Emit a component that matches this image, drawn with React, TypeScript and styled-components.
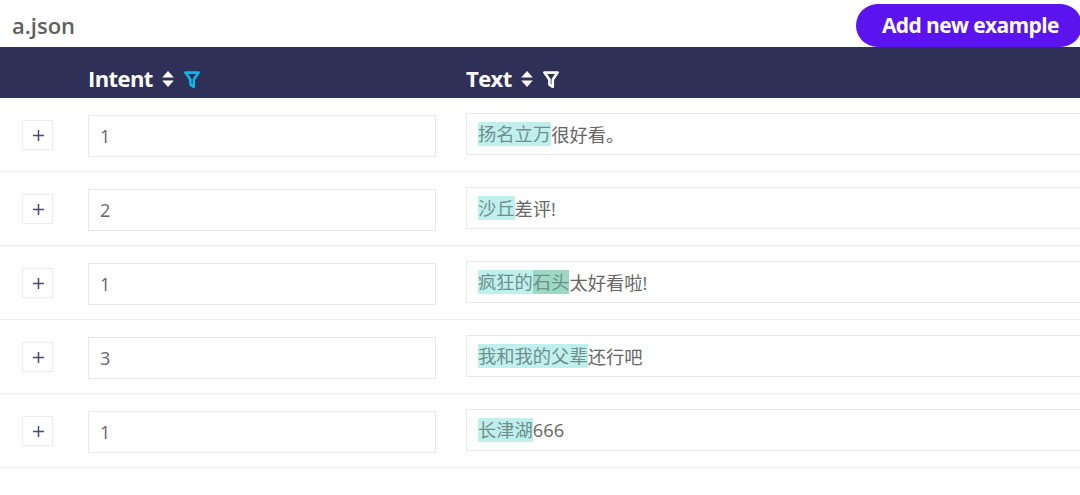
import { createGlobalStyle } from 'styled-components';
import styled from 'styled-components';

interface Mark {
  text: string;
  dark?: boolean;
}

interface Example {
  intent: string;
  marks: Mark[];
  rest: string;
}

const examples: Example[] = [
  { intent: '1', marks: [{ text: '扬名立万' }], rest: '很好看。' },
  { intent: '2', marks: [{ text: '沙丘' }], rest: '差评!' },
  { intent: '1', marks: [{ text: '疯狂的' }, { text: '石头', dark: true }], rest: '太好看啦!' },
  { intent: '3', marks: [{ text: '我和我的父辈' }], rest: '还行吧' },
  { intent: '1', marks: [{ text: '长津湖' }], rest: '666' },
];

const GlobalStyle = createGlobalStyle`
  html, body {
    margin: 0;
    padding: 0;
    background: #fff;
    overflow: hidden;
  }
  body {
    font-family: "Open Sans", "Noto Sans", "Noto Sans CJK SC", sans-serif;
  }
`;

const Page = styled.div`
  width: 1080px;
  height: 495px;
  overflow: hidden;
`;

const TopBar = styled.div`
  display: flex;
  justify-content: space-between;
  align-items: center;
  height: 47px;
  padding-left: 12px;
  box-sizing: border-box;
  width: 1082px;
`;

const FileName = styled.div`
  font-size: 22px;
  font-weight: 600;
  letter-spacing: 0;
  color: #5f5f5f;
  margin-top: 3px;
`;

const AddButton = styled.button`
  width: 226px;
  height: 43px;
  margin-top: 3px;
  border: none;
  border-radius: 22px;
  background: #5b14ee;
  color: #fff;
  font-family: inherit;
  font-size: 21px;
  font-weight: 700;
  letter-spacing: -0.62px;
  padding: 0 0 1px 3px;
  text-align: left;
  text-indent: 23px;
`;

const HeaderRow = styled.div`
  display: grid;
  grid-template-columns: 88px 378px 1fr;
  align-items: center;
  height: 51px;
  background: #2f3057;
  color: #fff;
`;

const HeaderCell = styled.div<{ $col: number }>`
  grid-column: ${(p) => p.$col};
  display: flex;
  align-items: center;
  font-size: 22px;
  font-weight: 700;
  letter-spacing: -0.6px;
  padding-top: 11px;
`;

const SortIcon = styled.svg`
  width: 12px;
  height: 18px;
  margin-left: 9px;
  margin-top: 1px;
`;

const FilterIcon = styled.svg`
  width: 16px;
  height: 18px;
  margin-left: 10px;
  margin-top: 4px;
`;

const PlusIcon = styled.svg`
  width: 11px;
  height: 11px;
  margin: 2px 0 0 1px;
`;

const Row = styled.div`
  display: grid;
  grid-template-columns: 88px 378px 1fr;
  align-items: center;
  height: 74px;
  box-sizing: border-box;
  border-bottom: 1px solid #ececec;
`;

const ExpandCell = styled.div`
  padding-left: 22px;
`;

const ExpandButton = styled.div`
  display: flex;
  align-items: center;
  justify-content: center;
  width: 31px;
  height: 30px;
  box-sizing: border-box;
  border: 1px solid #ececec;
`;

const IntentInput = styled.div`
  width: 348px;
  height: 42px;
  margin-top: 3px;
  box-sizing: border-box;
  border: 1px solid #e8e8e8;
  padding-left: 11px;
  display: flex;
  align-items: center;
  font-size: 18px;
  color: #666;
`;

const TextInput = styled.div`
  width: 640px;
  height: 42px;
  margin-bottom: 2px;
  box-sizing: border-box;
  border: 1px solid #e8e8e8;
  border-right: none;
  padding-left: 11px;
  display: flex;
  align-items: center;
  font-size: 18.3px;
  color: #666;
`;

const Highlight = styled.span<{ $dark?: boolean }>`
  display: inline-block;
  height: 24px;
  line-height: 24px;
  background: ${(p) => (p.$dark ? '#9dd8c3' : '#c0f0ed')};
  color: #6f8f8d;
`;

const Sort = () => (
  <SortIcon viewBox="0 0 12 18">
    <path d="M6 1 L11.8 7.6 H0.2 Z M0.2 10.4 H11.8 L6 17 Z" fill="#fff" />
  </SortIcon>
);

const Filter = ({ color }: { color: string }) => (
  <FilterIcon viewBox="0 0 16 18">
    <path
      d="M1.4 1.6 H14.6 L9.8 8.4 V15.8 L6.4 13.6 V8.4 Z"
      fill="none"
      stroke={color}
      strokeWidth="2.6"
      strokeLinejoin="round"
    />
  </FilterIcon>
);

export default function App() {
  return (
    <Page>
      <GlobalStyle />
      <TopBar>
        <FileName>a.json</FileName>
        <AddButton>Add new example</AddButton>
      </TopBar>
      <HeaderRow>
        <HeaderCell $col={2}>
          Intent
          <Sort />
          <Filter color="#14b4e6" />
        </HeaderCell>
        <HeaderCell $col={3}>
          Text
          <Sort />
          <Filter color="#fff" />
        </HeaderCell>
      </HeaderRow>
      {examples.map((example, i) => (
        <Row key={i}>
          <ExpandCell>
            <ExpandButton>
              <PlusIcon viewBox="0 0 11 11">
                <path d="M5.5 0 V11 M0 5.5 H11" stroke="#4a4a70" strokeWidth="1.5" />
              </PlusIcon>
            </ExpandButton>
          </ExpandCell>
          <IntentInput>{example.intent}</IntentInput>
          <TextInput>
            {example.marks.map((mark, j) => (
              <Highlight key={j} $dark={mark.dark}>
                {mark.text}
              </Highlight>
            ))}
            {example.rest}
          </TextInput>
        </Row>
      ))}
    </Page>
  );
}
